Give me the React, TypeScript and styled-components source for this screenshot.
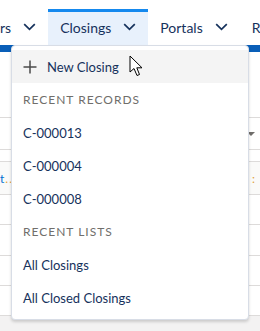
import React from "react";
import styled, { createGlobalStyle } from "styled-components";

const Global = createGlobalStyle`
  html, body { margin: 0; padding: 0; background: #ffffff; overflow: hidden; }
  body { font-family: "Lato", "Liberation Sans", sans-serif; }
`;

const Page = styled.div`
  position: relative;
  width: 260px;
  height: 331px;
  overflow: hidden;
  background: #f3f2f2;
`;

const Nav = styled.nav`
  display: flex;
  align-items: stretch;
  height: 45px;
  padding-top: 9px;
  box-sizing: border-box;
  background: #ffffff;
  margin-left: -12px;
  white-space: nowrap;
`;

const Tab = styled.div<{ $active?: boolean }>`
  display: flex;
  align-items: center;
  gap: 12px;
  padding: 0 12px 3px 12px;
  box-sizing: border-box;
  border-top: 3px solid ${(p) => (p.$active ? "#1589ee" : "transparent")};
  background: ${(p) => (p.$active ? "#e8f1fc" : "transparent")};
  color: #16325c;
  font-size: 14px;
`;

const Band = styled.div`
  height: 7px;
  background: #0a5fb8;
`;

const Content = styled.div`
  display: flex;
  flex-direction: column;
  background: #fafaf9;
`;

const Block = styled.div<{ $h: number; $bg?: string }>`
  height: ${(p) => p.$h}px;
  background: ${(p) => p.$bg || "#ffffff"};
  border-bottom: 1px solid #dddbda;
  box-sizing: border-box;
  display: flex;
  align-items: center;
  justify-content: space-between;
  padding: 0 4px 0 0;
  font-size: 12px;
  color: #3e3e3c;
`;

const Caret = styled.span`
  width: 0;
  height: 0;
  border-left: 4px solid transparent;
  border-right: 4px solid transparent;
  border-top: 4px solid #706e6b;
  margin-right: 1px;
`;

const Dots = styled.span`
  color: #0070d2;
  font-size: 12px;
  letter-spacing: 1px;
  & b { color: #e0a040; font-weight: normal; }
`;

const Menu = styled.div`
  position: absolute;
  left: 11px;
  top: 45px;
  width: 238px;
  height: 275px;
  box-sizing: border-box;
  background: #ffffff;
  border: 1px solid #d8dde6;
  border-radius: 4px;
  box-shadow: 0 2px 3px rgba(0, 0, 0, 0.16);
  padding: 4px 0 5px;
  display: flex;
  flex-direction: column;
`;

const Item = styled.div<{ $hover?: boolean }>`
  height: 33px;
  display: flex;
  align-items: center;
  gap: 10px;
  padding: 0 11px;
  background: ${(p) => (p.$hover ? "#f4f4f4" : "transparent")};
  color: #16325c;
  font-size: 13px;
`;

const Header = styled.div`
  height: 33px;
  display: flex;
  align-items: center;
  padding: 0 11px;
  color: #706e6b;
  font-size: 12px;
  letter-spacing: 1px;
  text-transform: uppercase;
`;

const Cursor = styled.svg`
  position: absolute;
  left: 129px;
  top: 55px;
`;

const Chevron = () => (
  <svg width="13" height="8" viewBox="0 0 13 8">
    <path d="M1.2 1.2 L6.5 6.4 L11.8 1.2" fill="none" stroke="#16325c" strokeWidth="1.7" />
  </svg>
);

const Plus = () => (
  <svg width="14" height="14" viewBox="0 0 14 14">
    <path d="M7 0.5 V13.5 M0.5 7 H13.5" stroke="#4a4a4a" strokeWidth="1.5" />
  </svg>
);

export default function App() {
  return (
    <>
      <Global />
      <Page>
        <Nav>
          <Tab>
            rs <Chevron />
          </Tab>
          <Tab $active>
            Closings <Chevron />
          </Tab>
          <Tab>
            Portals <Chevron />
          </Tab>
          <Tab>R</Tab>
        </Nav>
        <Band />
        <Content>
          <Block $h={66} />
          <Block $h={32}>
            <span />
            <Caret />
          </Block>
          <Block $h={12} />
          <Block $h={33} $bg="#fafaf9">
            <Dots>
              t<b>..</b>
            </Dots>
            <span>
              G <Dots><b>:</b></Dots>
            </span>
          </Block>
          <Block $h={30} />
          <Block $h={31} />
          <Block $h={30} />
          <Block $h={30} />
        </Content>
        <Menu>
          <Item $hover>
            <Plus />
            New Closing
          </Item>
          <Header>Recent Records</Header>
          <Item>C-000013</Item>
          <Item>C-000004</Item>
          <Item>C-000008</Item>
          <Header>Recent Lists</Header>
          <Item>All Closings</Item>
          <Item>All Closed Closings</Item>
        </Menu>
        <Cursor width="14" height="23" viewBox="0 0 14 23">
          <path
            d="M1 1 L1 17 L5 13.5 L8 20.5 L10.5 19.5 L7.8 12.8 L13 12.8 Z"
            fill="#ffffff"
            stroke="#000000"
            strokeWidth="1"
            strokeLinejoin="round"
          />
        </Cursor>
      </Page>
    </>
  );
}
